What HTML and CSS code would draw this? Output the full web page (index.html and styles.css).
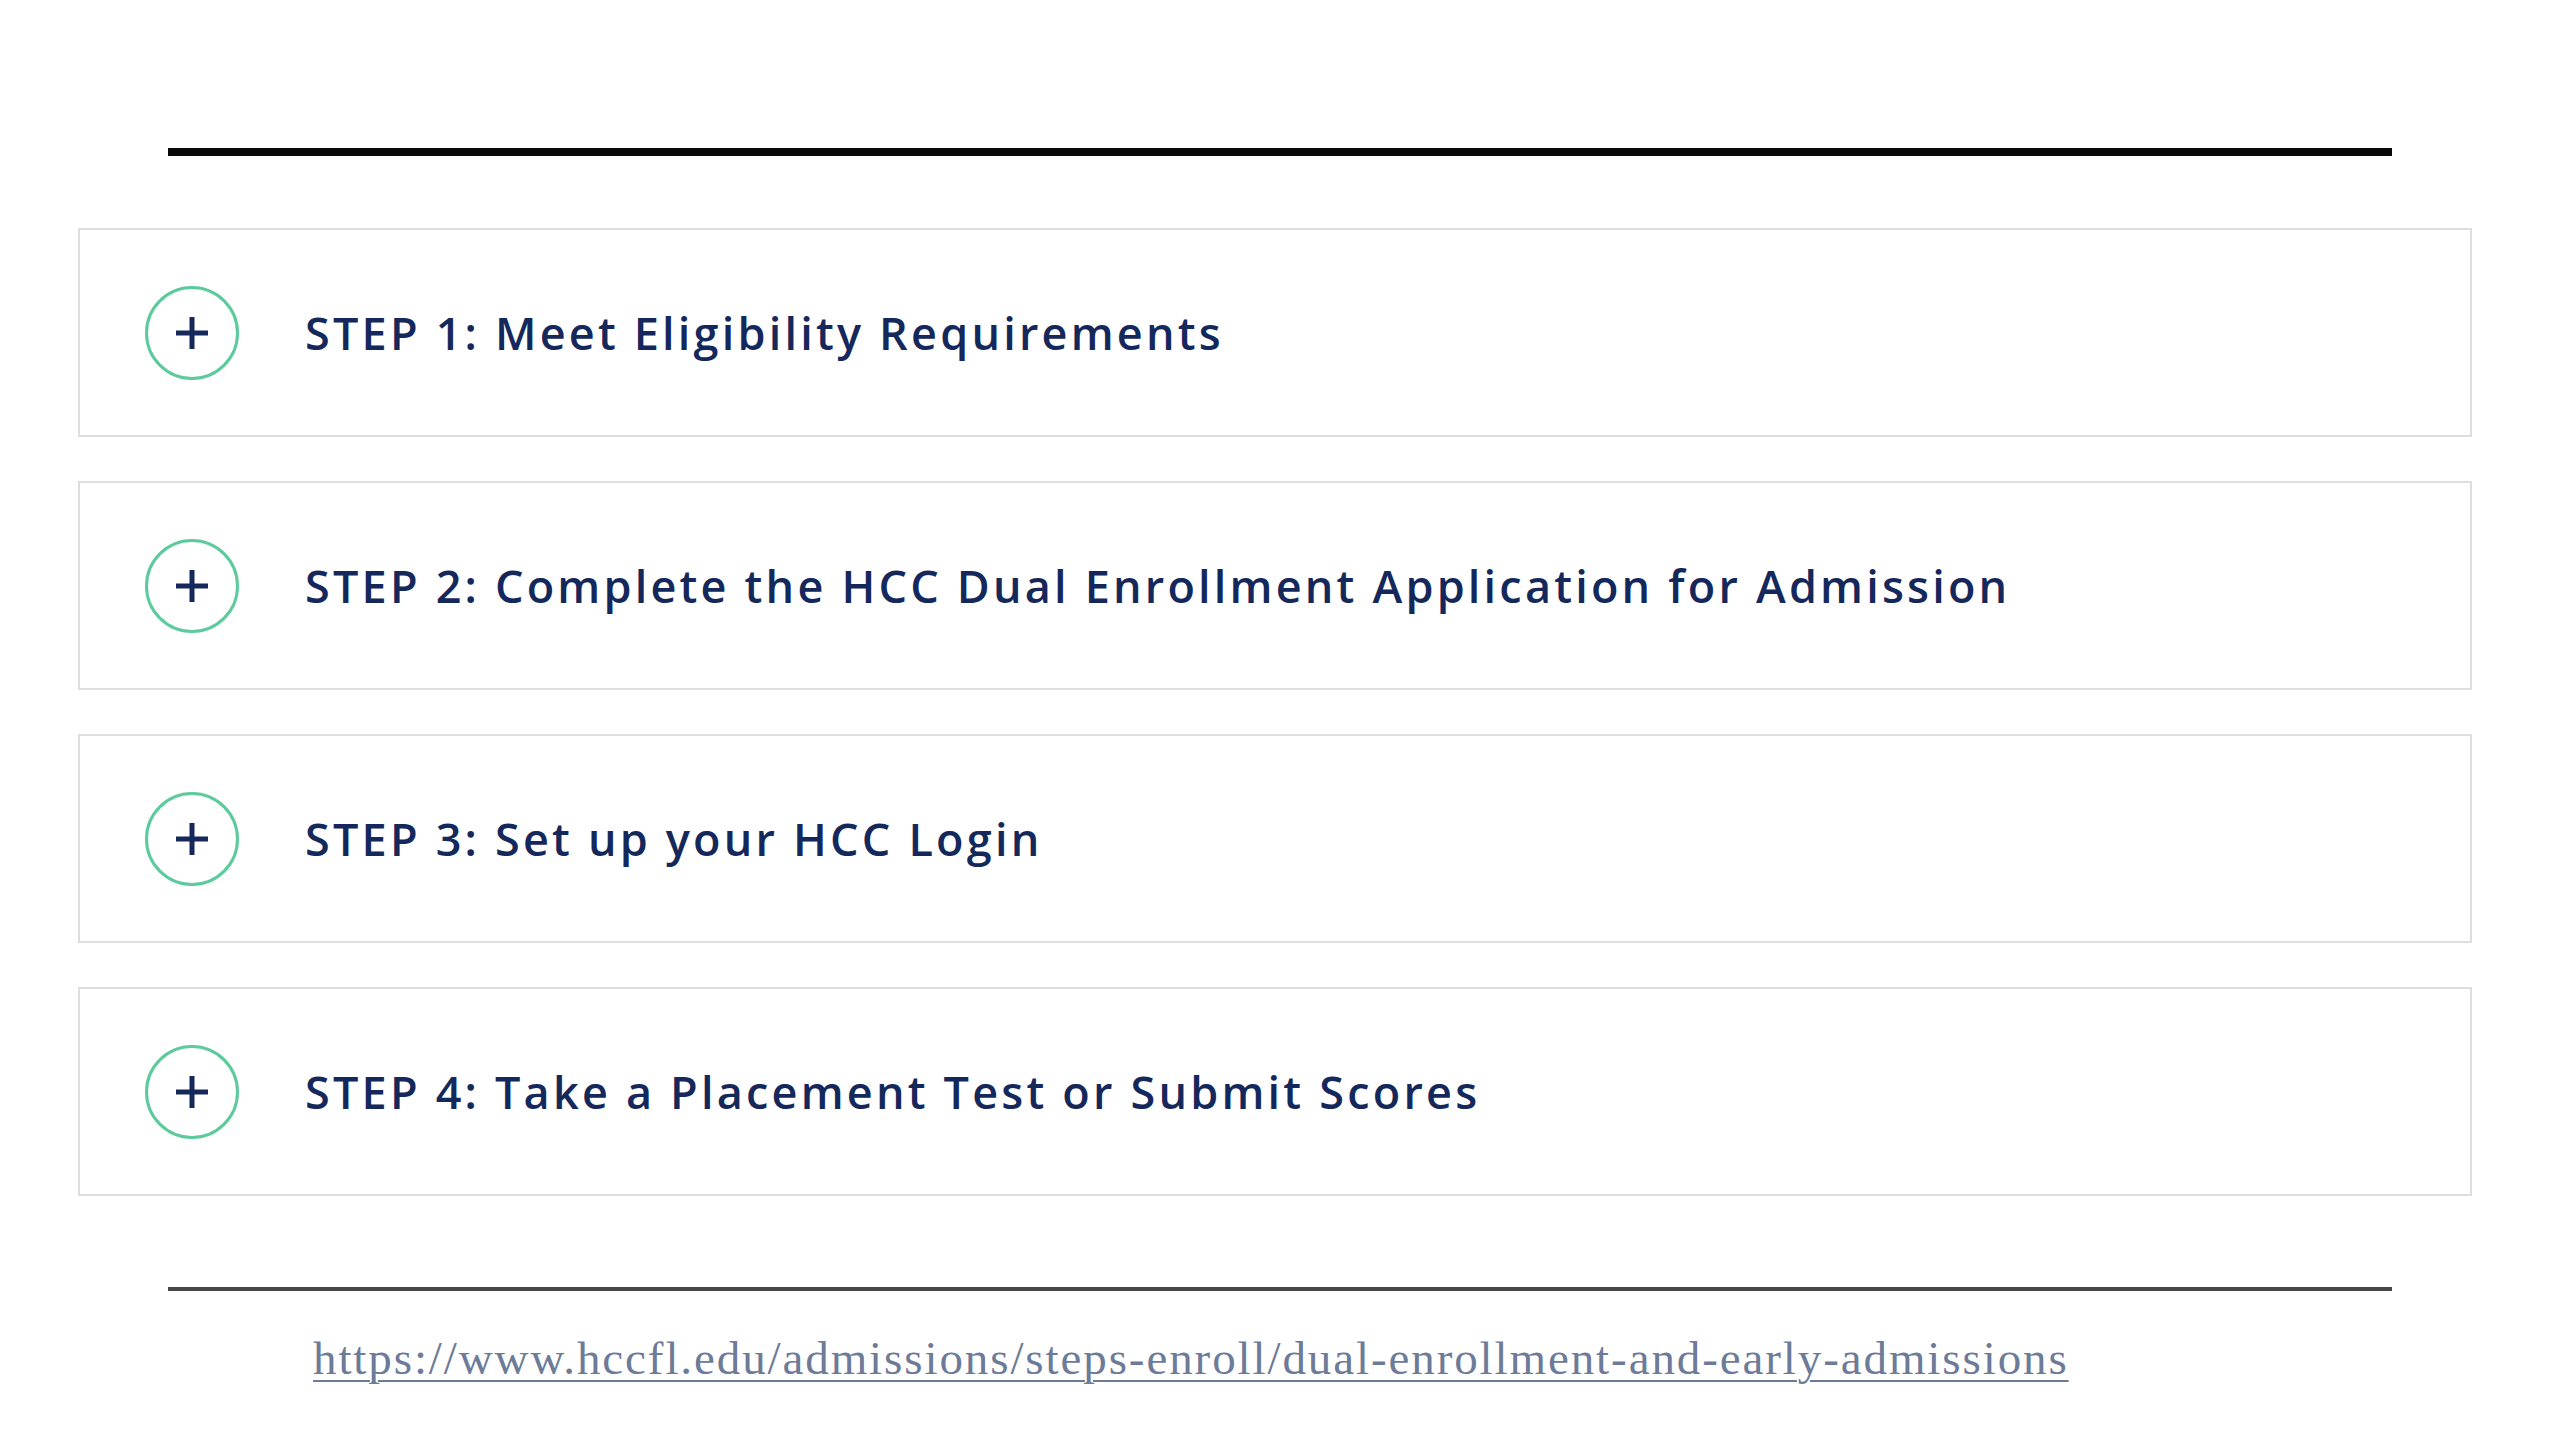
FILE: index.html
```html
<!DOCTYPE html>
<html lang="en">
<head>
<meta charset="utf-8">
<title>Dual Enrollment Steps</title>
<link rel="stylesheet" href="styles.css">
</head>
<body>
<main class="page">
  <hr class="rule rule-top">
  <section class="steps">
    <div class="step">
      <span class="toggle"><svg viewBox="0 0 34 34" class="plus"><path d="M17 1V33M1 17H33"/></svg></span>
      <h3 class="step-title">STEP 1: Meet Eligibility Requirements</h3>
    </div>
    <div class="step">
      <span class="toggle"><svg viewBox="0 0 34 34" class="plus"><path d="M17 1V33M1 17H33"/></svg></span>
      <h3 class="step-title">STEP 2: Complete the HCC Dual Enrollment Application for Admission</h3>
    </div>
    <div class="step">
      <span class="toggle"><svg viewBox="0 0 34 34" class="plus"><path d="M17 1V33M1 17H33"/></svg></span>
      <h3 class="step-title">STEP 3: Set up your HCC Login</h3>
    </div>
    <div class="step">
      <span class="toggle"><svg viewBox="0 0 34 34" class="plus"><path d="M17 1V33M1 17H33"/></svg></span>
      <h3 class="step-title">STEP 4: Take a Placement Test or Submit Scores</h3>
    </div>
  </section>
  <hr class="rule rule-bottom">
  <p class="source"><a href="#">https://www.hccfl.edu/admissions/steps-enroll/dual-enrollment-and-early-admissions</a></p>
</main>
</body>
</html>
```

FILE: styles.css
```css
html, body {
  margin: 0;
  padding: 0;
  background: #ffffff;
}

.page {
  width: 2560px;
  height: 1440px;
  box-sizing: border-box;
  padding-top: 148px;
  display: flex;
  flex-direction: column;
}

.rule {
  border: 0;
  margin: 0 0 0 168px;
  width: 2224px;
}

.rule-top {
  height: 8px;
  background: #0a0a0a;
}

.rule-bottom {
  height: 4px;
  background: #474747;
  margin-top: 91px;
}

.steps {
  margin: 72px 0 0 78px;
  width: 2394px;
  display: flex;
  flex-direction: column;
  gap: 44px;
}

.step {
  height: 209px;
  box-sizing: border-box;
  border: 2px solid #dedede;
  background: #ffffff;
  display: flex;
  align-items: center;
  padding-left: 65px;
  gap: 66px;
}

.toggle {
  width: 94px;
  height: 94px;
  box-sizing: border-box;
  border: 3px solid #5ccb9c;
  border-radius: 50%;
  display: flex;
  align-items: center;
  justify-content: center;
  flex: none;
}

.plus {
  width: 34px;
  height: 34px;
}

.plus path {
  stroke: #15285c;
  stroke-width: 5;
  fill: none;
}

.step-title {
  margin: 0;
  font-family: "Open Sans", "Noto Sans", sans-serif;
  font-weight: 600;
  font-size: 45px;
  color: #15285c;
  letter-spacing: 3.2px;
  white-space: nowrap;
}

.source {
  margin: 44px 0 0 313px;
  font-family: "Liberation Serif", "Times New Roman", serif;
  font-size: 47px;
  letter-spacing: 1.9px;
  line-height: 1;
}

.source a {
  color: #6c7b98;
  text-decoration: underline;
  text-decoration-thickness: 2px;
  text-underline-offset: 6px;
}
```
